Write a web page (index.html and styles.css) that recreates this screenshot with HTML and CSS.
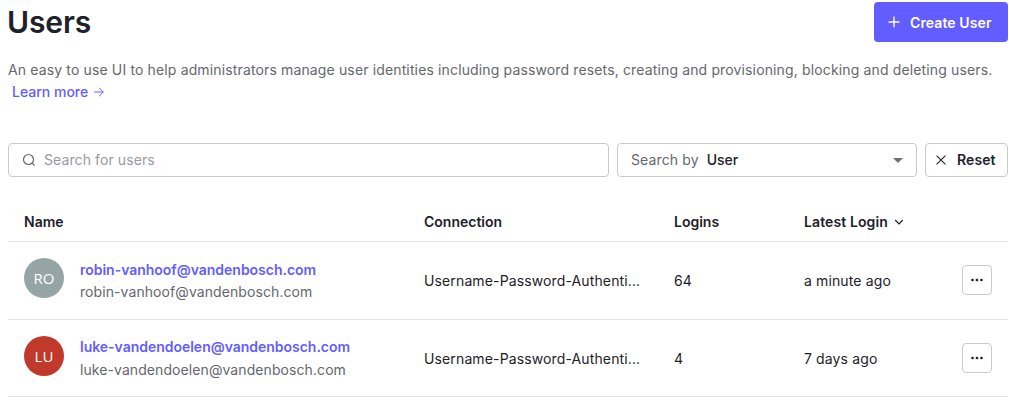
FILE: index.html
```html
<!DOCTYPE html>
<html lang="en">
<head>
<meta charset="utf-8">
<title>Users</title>
<link rel="stylesheet" href="styles.css">
</head>
<body>
<main class="page">
  <header class="page-header">
    <h1 class="title">Users</h1>
    <button class="create" type="button">
      <svg width="12" height="12" viewBox="0 0 12 12" fill="none" stroke="currentColor" stroke-width="1.3"><path d="M6 .5v11M.5 6h11"/></svg>
      <span class="create-label">Create User</span>
    </button>
  </header>
  <p class="intro"><span class="intro-text">An easy to use UI to help administrators manage user identities including password resets, creating and provisioning, blocking and deleting users.</span>
    <a class="learn"><span class="learn-label">Learn more</span><svg width="12" height="12" viewBox="0 0 12 12" fill="none" stroke="currentColor" stroke-width="1"><path d="M1 6h9.3M6.1 1.8 10.3 6l-4.2 4.2"/></svg></a>
  </p>
  <div class="filters">
    <div class="search">
      <svg width="14" height="14" viewBox="0 0 14 14" fill="none" stroke="currentColor" stroke-width="1.2"><circle cx="6.5" cy="6.5" r="5"/><path d="M10.1 10.1l2.4 2.4"/></svg>
      <span class="placeholder">Search for users</span>
    </div>
    <div class="select">
      <span class="select-label">Search by</span><span class="select-value">User</span>
      <svg class="caret" width="10" height="5" viewBox="0 0 10 5"><path d="M0 0h10L5 5z" fill="currentColor"/></svg>
    </div>
    <button class="reset" type="button">
      <svg width="10" height="10" viewBox="0 0 10 10" fill="none" stroke="currentColor" stroke-width="1.1"><path d="M.6.6l8.8 8.8M9.4.6.6 9.4"/></svg>
      <span class="reset-label">Reset</span>
    </button>
  </div>
  <section class="table">
    <div class="row head">
      <span class="th-name">Name</span><span class="th-conn">Connection</span><span class="th-logins">Logins</span>
      <span class="sort"><span class="th-latest">Latest Login</span><svg width="10" height="6" viewBox="0 0 10 6" fill="none" stroke="currentColor" stroke-width="1.2"><path d="M1.2 1 5 4.8 8.8 1"/></svg></span>
    </div>
    <div class="row first">
      <div class="user">
        <span class="avatar gray">RO</span>
        <div class="identity"><a class="email">robin-vanhoof@vandenbosch.com</a><span class="sub">robin-vanhoof@vandenbosch.com</span></div>
      </div>
      <span class="cell">Username-Password-Authenti...</span><span class="cell">64</span><span class="cell">a minute ago</span>
      <button class="more" type="button" aria-label="More"><svg width="14" height="4" viewBox="0 0 14 4" fill="currentColor"><circle cx="2.5" cy="2" r="1.35"/><circle cx="7" cy="2" r="1.35"/><circle cx="11.5" cy="2" r="1.35"/></svg></button>
    </div>
    <div class="row">
      <div class="user">
        <span class="avatar red">LU</span>
        <div class="identity"><a class="email">luke-vandendoelen@vandenbosch.com</a><span class="sub low">luke-vandendoelen@vandenbosch.com</span></div>
      </div>
      <span class="cell">Username-Password-Authenti...</span><span class="cell">4</span><span class="cell">7 days ago</span>
      <button class="more" type="button" aria-label="More"><svg width="14" height="4" viewBox="0 0 14 4" fill="currentColor"><circle cx="2.5" cy="2" r="1.35"/><circle cx="7" cy="2" r="1.35"/><circle cx="11.5" cy="2" r="1.35"/></svg></button>
    </div>
  </section>
</main>
</body>
</html>
```
FILE: styles.css
```css
* { box-sizing: border-box; }
body {
  margin: 0;
  background: #fff;
  color: #1e212a;
  font: 400 14px/22px Inter, "Liberation Sans", sans-serif;
  overflow: hidden;
}
svg { display: block; flex: none; }
button { font: inherit; color: inherit; background: #fff; margin: 0; }
.page { width: 1000px; margin-left: 8px; padding-top: 2px; }
.page-header { display: flex; justify-content: space-between; height: 40px; }
.title { margin: 0 0 0 -1px; font-size: 30px; line-height: 41px; font-weight: 600; letter-spacing: -.1px; }
.create {
  display: flex; align-items: center; gap: 10px;
  width: 134px; height: 40px; padding: 0 0 0 14px;
  border: 0; border-radius: 4px; background: #635dff; color: #fff;
}
.create-label { font-weight: 600; padding-top: 2px; letter-spacing: .1px; }
.intro { margin: 17px 0 0; height: 44px; color: #65676e; white-space: nowrap; }
.intro-text { display: block; letter-spacing: .14px; }
.learn { display: flex; align-items: center; gap: 5px; margin-left: 4px; color: #635dff; font-weight: 500; }
.filters { display: flex; gap: 8px; margin-top: 40px; height: 34px; }
.search, .select, .reset {
  display: flex; align-items: center;
  border: 1px solid #c9cace; border-radius: 4px;
}
.search { width: 601px; padding-left: 13px; gap: 8px; color: #65676e; }
.placeholder { color: #989a9f; letter-spacing: .1px; }
.select { width: 300px; padding: 0 13px; gap: 8px; }
.select-label { color: #65676e; letter-spacing: .12px; }
.select-value { font-weight: 500; }
.caret { margin-left: auto; color: #707070; }
.reset { width: 83px; padding: 0 0 0 10px; gap: 11px; }
.reset-label { font-weight: 600; letter-spacing: .1px; }
.table { margin-top: 26px; }
.row {
  display: grid; grid-template-columns: 400px 250px 130px 158px 30px;
  align-items: center; height: 77px; padding-left: 16px;
  border-bottom: 1px solid #e3e4e6;
}
.first { height: 78px; }
.head { height: 39px; font-weight: 600; }
.sort { display: flex; align-items: center; gap: 6px; }
.th-latest { letter-spacing: .1px; }
.user { display: flex; gap: 16px; align-items: center; }
.avatar {
  display: flex; align-items: center; justify-content: center;
  width: 40px; height: 40px; margin-bottom: 4px; border-radius: 50%;
  font: 400 15px/20px "Open Sans", sans-serif; color: #fff;
}
.first .avatar { margin-bottom: 6px; }
.identity { display: flex; flex-direction: column; }
.gray { background: #95a5a6; }
.red { background: #c0392b; }
.email { color: #635dff; font-weight: 600; letter-spacing: -.02px; }
.sub { color: #65676e; letter-spacing: .08px; }
.low { padding-top: 1px; margin-bottom: -1px; }
.cell { padding-top: 2px; letter-spacing: .13px; }
.first .cell { padding-top: 0; }
.more {
  display: flex; align-items: center; justify-content: center;
  width: 30px; height: 30px; padding: 0; border: 1px solid #c9cace; border-radius: 4px;
}
.first .more { margin-top: -2px; }
```
